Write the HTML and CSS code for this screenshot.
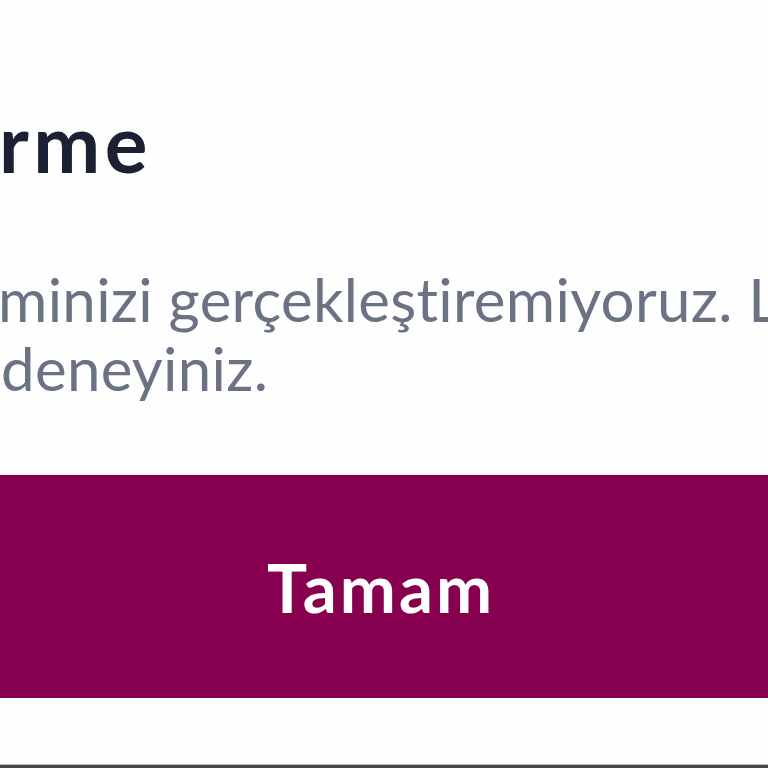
FILE: index.html
```html
<!DOCTYPE html>
<html lang="tr">
<head>
<meta charset="utf-8">
<link rel="stylesheet" href="styles.css">
</head>
<body>
<div class="dialog">
  <div class="content">
    <h1 class="title">rme</h1>
    <p class="message"><span class="line">minizi gerçekleştiremiyoruz. L</span><span class="line">deneyiniz.</span></p>
  </div>
  <button class="ok">Tamam</button>
  <div class="spacer"></div>
</div>
<div class="edge"></div>
</body>
</html>
```

FILE: styles.css
```css
html, body {
  margin: 0;
  padding: 0;
  width: 768px;
  height: 768px;
  overflow: hidden;
  background: #ffffff;
  font-family: "Lato", "Noto Sans", sans-serif;
}
.dialog {
  display: flex;
  flex-direction: column;
  height: 764px;
  background: #fefefe;
}
.content {
  padding: 102px 0 0 0;
  height: 403px;
  box-sizing: border-box;
}
.title {
  margin: 0 0 0 -1px;
  font-size: 80px;
  font-weight: 700;
  line-height: 80px;
  letter-spacing: 4.5px;
  color: #1c2033;
  white-space: nowrap;
}
.message {
  margin: 83px 0 0 -2px;
  font-size: 60px;
  line-height: 69px;
  letter-spacing: 0.3px;
  color: #6a7284;
  font-weight: 400;
}
.line {
  display: block;
  white-space: nowrap;
}
.line + .line {
  margin-left: 3px;
}
.ok {
  display: flex;
  align-items: center;
  justify-content: center;
  margin: 72px 0 0 0;
  width: 768px;
  height: 223px;
  border: 0;
  padding: 0 6px 0 0;
  background: #870050;
  color: #ffffff;
  font-family: "Lato", "Noto Sans", sans-serif;
  font-size: 67px;
  font-weight: 700;
  letter-spacing: 3px;
}
.spacer {
  flex: 1;
}
.edge {
  height: 4px;
  background: #474747;
  border-top: 1px solid #bdbdbd;
}
```
